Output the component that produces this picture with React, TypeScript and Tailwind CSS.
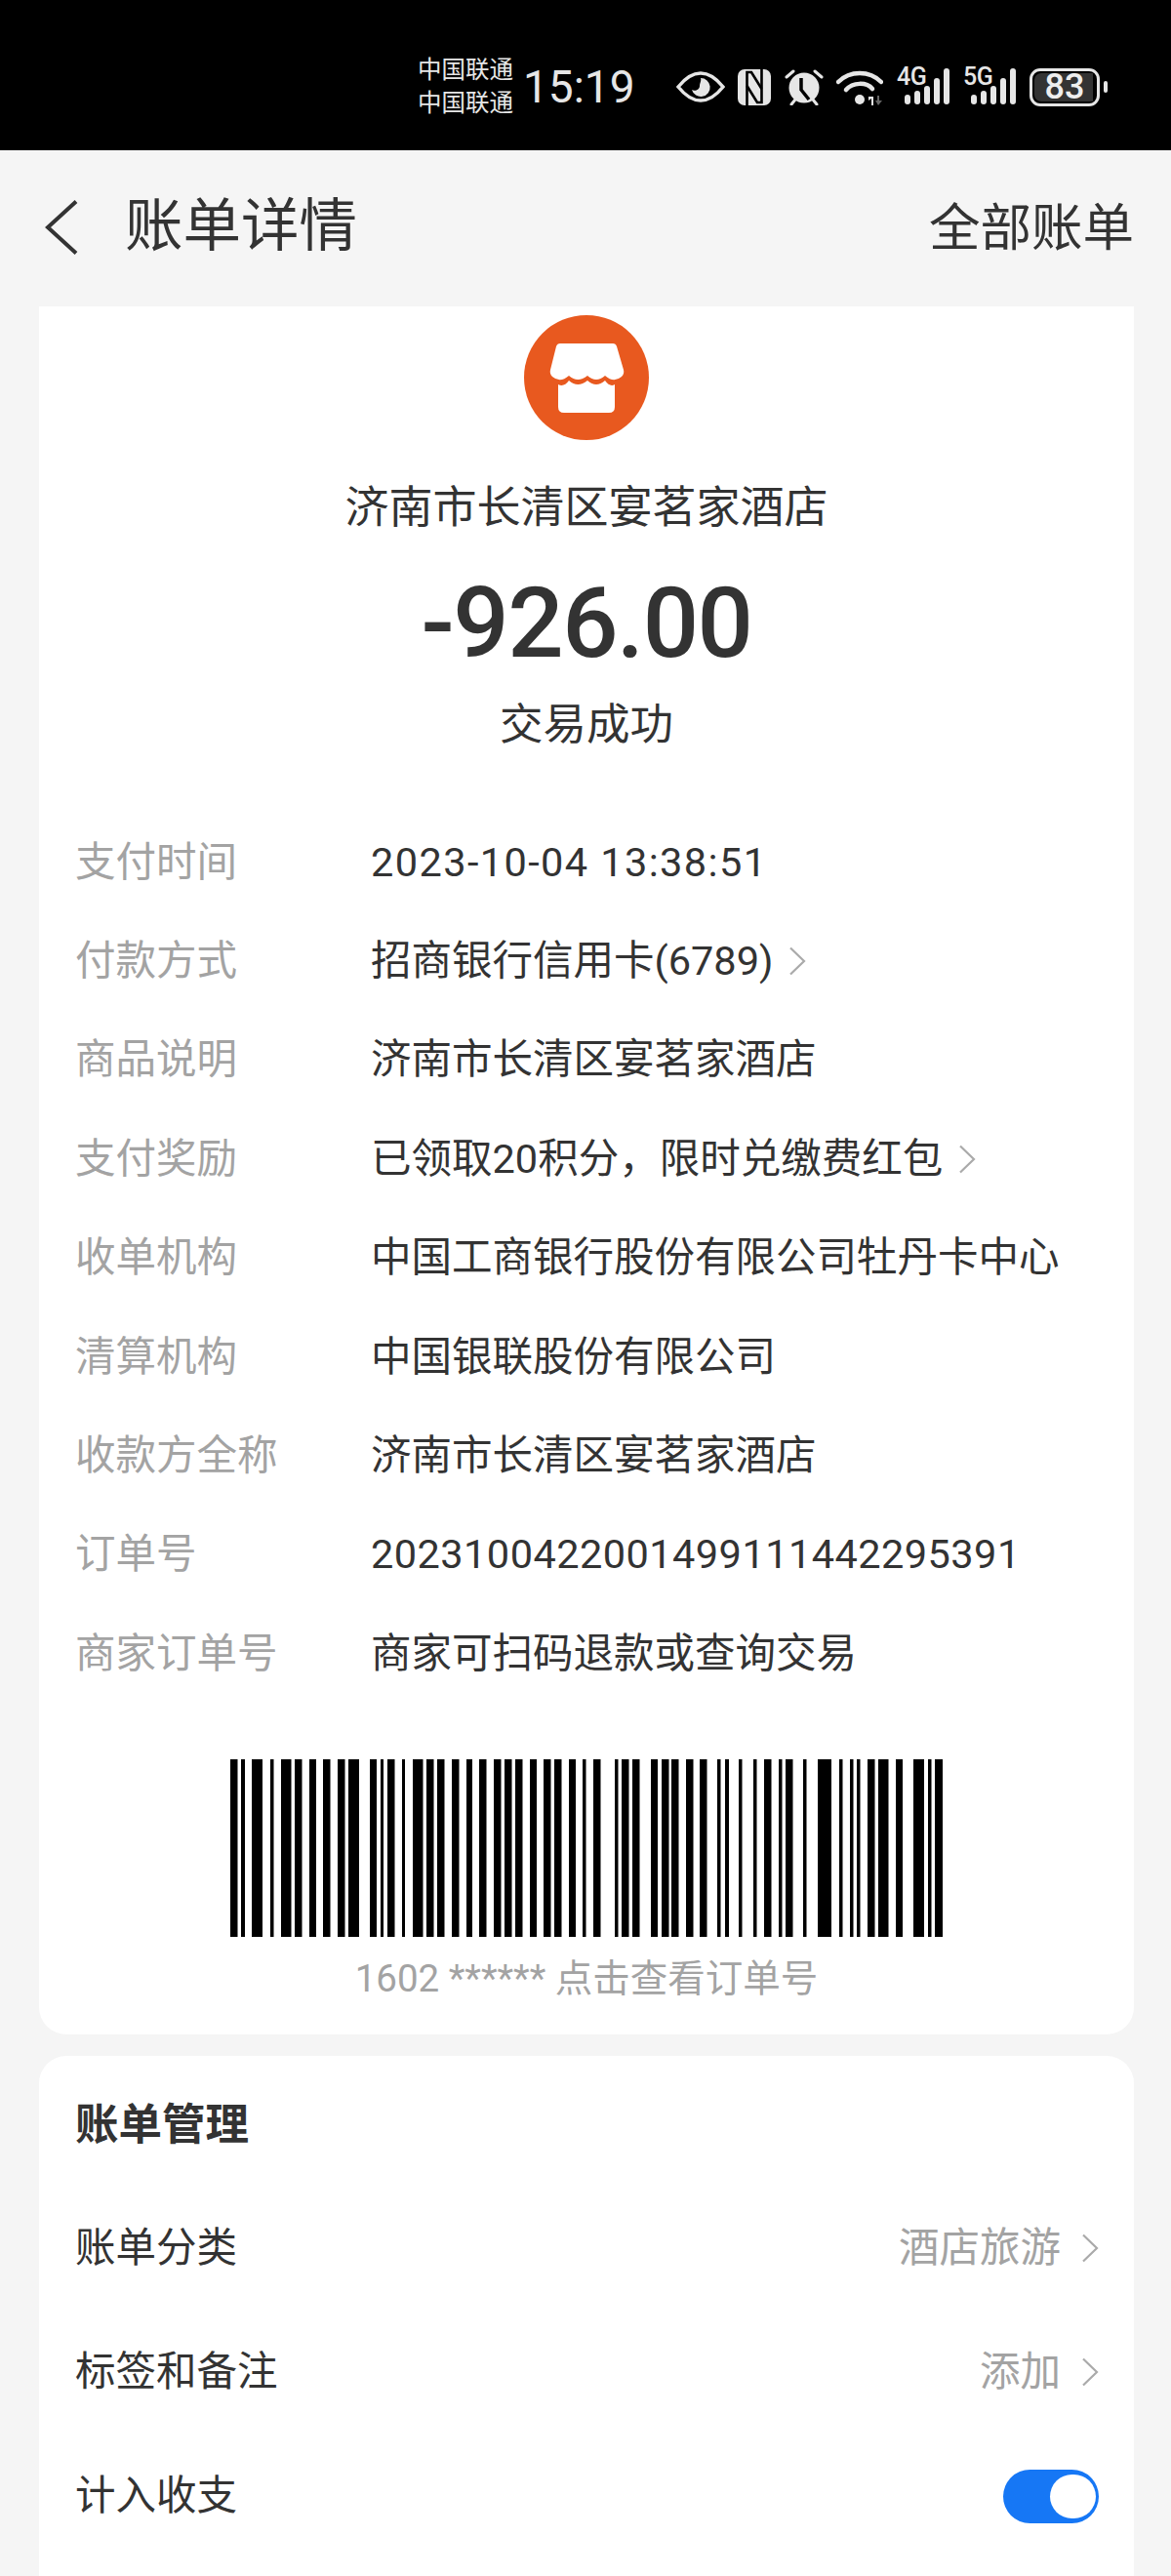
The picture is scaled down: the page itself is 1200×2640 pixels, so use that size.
import React from "react";

// 账单详情 screen

type Row = { label: string; value: string; arrow?: boolean; spacing?: string };

const rows: Row[] = [
  { label: "支付时间", value: "2023-10-04 13:38:51", spacing: "tracking-[1.4px]" },
  { label: "付款方式", value: "招商银行信用卡(6789)", arrow: true },
  { label: "商品说明", value: "济南市长清区宴茗家酒店" },
  { label: "支付奖励", value: "已领取20积分，限时兑缴费红包", arrow: true },
  { label: "收单机构", value: "中国工商银行股份有限公司牡丹卡中心" },
  { label: "清算机构", value: "中国银联股份有限公司" },
  { label: "收款方全称", value: "济南市长清区宴茗家酒店" },
  { label: "订单号", value: "2023100422001499111442295391", spacing: "tracking-[0.45px]" },
  { label: "商家订单号", value: "商家可扫码退款或查询交易" },
];

// [start, end] of every bar, in page x
const bars: [number, number][] = [
  [238, 245.5], [249, 253], [260, 271], [279, 282.5], [290, 300.5], [304, 311.5], [319, 326], [333, 340.5],
  [348, 355.5], [359, 370], [381, 388], [392, 395], [399, 406.5], [414, 417], [425, 435.5], [439, 446.5],
  [450, 457.5], [465, 472.5], [480, 486], [493, 500.5], [508, 515.5], [519, 526.5], [530, 537.5], [545, 552],
  [559, 566.5], [570, 577.5], [585, 592], [599, 602.5], [610, 617.5], [632, 635.5], [639, 646.5], [650, 657.5],
  [669, 676], [680, 687.5], [690, 697.5], [705, 712.5], [719, 726.5], [737, 740.5], [745, 749], [759, 762.5],
  [774, 777.5], [785, 792.5], [800, 803.5], [807, 814.5], [825, 828.5], [840, 854], [862, 865.5], [873, 876.5],
  [880, 883.5], [891, 898.5], [902, 912.5], [920, 927], [938, 949], [953, 956.5], [960, 968],
];

const Chevron = ({ className = "" }: { className?: string }) => (
  <svg width="18" height="30" viewBox="0 0 18 30" fill="none" className={className}>
    <path d="M2 1.5 L16 15 L2 28.5" stroke="#aaaaaa" strokeWidth="2.2" />
  </svg>
);

const Signal = () => (
  <svg width="46" height="38" viewBox="0 0 46 38" fill="#e6e6e6">
    <rect x="0" y="27" width="6" height="10" rx="3" />
    <rect x="10" y="23" width="6" height="14" rx="3" />
    <rect x="20" y="18" width="6" height="19" rx="3" />
    <rect x="30" y="10" width="6" height="27" rx="3" />
    <rect x="40" y="0" width="6" height="37" rx="3" />
  </svg>
);

const StatusBar = () => (
  <div className="h-[154px] bg-black flex items-center pl-[428px] pt-[24px] text-[#e6e6e6]">
    <div className="w-[97px] text-[24.5px] leading-[34px] whitespace-nowrap">
      <div>中国联通</div>
      <div>中国联通</div>
    </div>
    <div className="ml-[11px] text-[46px] leading-none w-[120px]">15:19</div>

    {/* eye */}
    <svg width="50" height="32" viewBox="0 0 50 32" className="ml-[37px]">
      <path d="M2 16 C10 6 17 2 25 2 C33 2 40 6 48 16 C40 26 33 30 25 30 C17 30 10 26 2 16 Z" fill="none" stroke="#e6e6e6" strokeWidth="3.5" />
      <path d="M25 7 A9.5 9.5 0 1 1 16 19 C19 21 24 19 24 15 C24 12 26 10 25 7 Z" fill="#e6e6e6" />
    </svg>

    {/* NFC */}
    <svg width="34" height="37" viewBox="0 0 34 37" className="ml-[13px]">
      <rect x="0" y="0" width="34" height="37" rx="7" fill="#e6e6e6" />
      <path d="M9.5 37 V3 H14 L24.5 20" fill="none" stroke="#000" strokeWidth="2.6" />
      <path d="M24.5 0 V34 H20 L9.5 17" fill="none" stroke="#000" strokeWidth="2.6" />
    </svg>

    {/* alarm */}
    <svg width="40" height="37" viewBox="0 0 40 37" className="ml-[14px]">
      <circle cx="20" cy="19" r="15.5" fill="#e6e6e6" />
      <path d="M17 9 V21 L25 31" fill="none" stroke="#000" strokeWidth="3.5" />
      <path d="M2 8 L9 2 M38 8 L31 2 M7 36 L11 31 M33 36 L29 31" stroke="#e6e6e6" strokeWidth="3" strokeLinecap="round" />
    </svg>

    {/* wifi */}
    <svg width="48" height="38" viewBox="0 0 48 38" className="ml-[13px]">
      <path d="M2 14 C14 2 34 2 46 14" fill="none" stroke="#e6e6e6" strokeWidth="4.5" strokeLinecap="round" />
      <path d="M10 22 C17 14 31 14 37 21" fill="none" stroke="#e6e6e6" strokeWidth="4.5" strokeLinecap="round" />
      <circle cx="24" cy="32" r="5" fill="#e6e6e6" />
      <path d="M33 29 L38 29 L38 38 L36 38 L36 31 L33 33 Z" fill="#e6e6e6" />
      <path d="M42 28 H44 V33 H47 L43 38 L40 33 H42 Z" fill="#666666" />
    </svg>

    {/* 4G */}
    <div className="ml-[14px] relative w-[54px] h-[38px]">
      <span className="absolute left-0 top-[-3px] text-[25px] leading-[24px] font-medium tracking-[-0.5px]">4G</span>
      <div className="absolute right-0 top-0">
        <Signal />
      </div>
    </div>

    {/* 5G */}
    <div className="ml-[14px] relative w-[54px] h-[38px]">
      <span className="absolute left-0 top-[-3px] text-[25px] leading-[24px] font-medium tracking-[-0.5px]">5G</span>
      <div className="absolute right-0 top-0">
        <Signal />
      </div>
    </div>

    {/* battery */}
    <div className="ml-[14px] w-[72px] h-[39px] rounded-[11px] border-[3px] border-[#e6e6e6] p-[2px]">
      <div className="h-full w-[60px] bg-[#333333] rounded-l-[7px] flex items-center justify-center">
        <span className="text-[36px] leading-none font-medium text-[#eeeeee] ml-[2px]">83</span>
      </div>
    </div>
    <div className="ml-[4px] w-[4px] h-[12px] rounded-full bg-[#e6e6e6]" />
  </div>
);

const Header = () => (
  <div className="h-[160px] flex items-center justify-between pl-[46px] pr-[38px] pb-[3px] text-[#333333]">
    <div className="flex items-center">
      <svg width="34" height="56" viewBox="0 0 34 56" fill="none" className="shrink-0">
        <path d="M32 1.5 L3 28 L32 54.5" stroke="#333333" strokeWidth="4" />
      </svg>
      <span className="ml-[48px] text-[59.5px] leading-none">账单详情</span>
    </div>
    <span className="text-[52.5px] leading-none mt-[4px]">全部账单</span>
  </div>
);

const StoreIcon = () => (
  <svg width="128" height="128" viewBox="0 0 128 128">
    <circle cx="64" cy="64" r="64" fill="#e8591f" />
    <path
      d="M37 29 H91 Q94 29 95 32 L102 56 Q103 60 100 63 Q92 70 83 62 Q74 70 65 62 Q55 70 46 62 Q37 70 29 63 Q26 60 27 56 L33 32 Q34 29 37 29 Z"
      fill="#ffffff"
    />
    <path
      d="M35 71 Q41 74 46 67 Q55 75 65 67 Q74 75 83 67 Q88 74 93 71 V94 Q93 100 87 100 H41 Q35 100 35 94 Z"
      fill="#ffffff"
    />
  </svg>
);

const Barcode = () => (
  <svg width="730" height="182" viewBox="238 0 730 182" className="block mx-auto">
    {bars.map(([start, end]) => (
      <rect key={start} x={start} y="0" width={end - start} height="182" fill="#000000" />
    ))}
  </svg>
);

const ManageRow = ({ label, value }: { label: string; value: string }) => (
  <div className="h-[127px] flex items-center justify-between">
    <span className="text-[41.5px] text-[#333333]">{label}</span>
    <div className="flex items-center">
      <span className="text-[41.5px] text-[#a3a3a3]">{value}</span>
      <Chevron className="ml-[21px]" />
    </div>
  </div>
);

export default function App() {
  return (
    <div className="w-[1200px] h-[2640px] overflow-hidden bg-[#f5f5f5] font-['Roboto','Noto_Sans_CJK_SC',sans-serif]">
      <StatusBar />
      <Header />

      <div className="mx-[40px] w-[1122px]">
        {/* 账单详情 card */}
        <div className="bg-white rounded-b-[28px] pt-[9px] pb-[32px]">
          <div className="flex justify-center">
            <StoreIcon />
          </div>
          <div className="mt-[40px] h-[60px] leading-[60px] text-center text-[45px] text-[#333333]">
            济南市长清区宴茗家酒店
          </div>
          <div className="mt-[28px] h-[120px] leading-[120px] text-center text-[101px] tracking-[-1.5px] font-medium text-[#333333]">
            -926.00
          </div>
          <div className="mt-[14px] h-[60px] leading-[60px] text-center text-[44.5px] text-[#333333]">交易成功</div>

          <div className="mt-[60px] pl-[37px]">
            {rows.map((row) => (
              <div key={row.label} className="h-[101.4px] flex items-center">
                <span className="w-[303px] shrink-0 text-[41.5px] text-[#a3a3a3]">{row.label}</span>
                <span className={`text-[41.5px] text-[#333333] ${row.spacing ?? ""}`}>{row.value}</span>
                {row.arrow && <Chevron className="ml-[16px]" />}
              </div>
            ))}
          </div>

          <div className="mt-[57px]">
            <Barcode />
          </div>
          <div className="mt-[18px] h-[50px] leading-[50px] text-center text-[38.5px] text-[#a3a3a3]">
            1602 ****** 点击查看订单号
          </div>
        </div>

        {/* 账单管理 card */}
        <div className="mt-[22px] bg-white rounded-t-[28px] pt-[41px] pl-[37px] pr-[36px] h-[600px]">
          <div className="h-[60px] leading-[60px] text-[44.5px] font-bold text-[#333333]">账单管理</div>
          <div className="mt-[33px]">
            <ManageRow label="账单分类" value="酒店旅游" />
            <ManageRow label="标签和备注" value="添加" />
            <div className="h-[127px] flex items-center justify-between">
              <span className="text-[41.5px] text-[#333333]">计入收支</span>
              <div className="w-[98px] h-[55px] rounded-full bg-[#1677f5] flex items-center justify-end pr-[3px]">
                <div className="w-[47px] h-[45px] rounded-full bg-white" />
              </div>
            </div>
          </div>
        </div>
      </div>
    </div>
  );
}
